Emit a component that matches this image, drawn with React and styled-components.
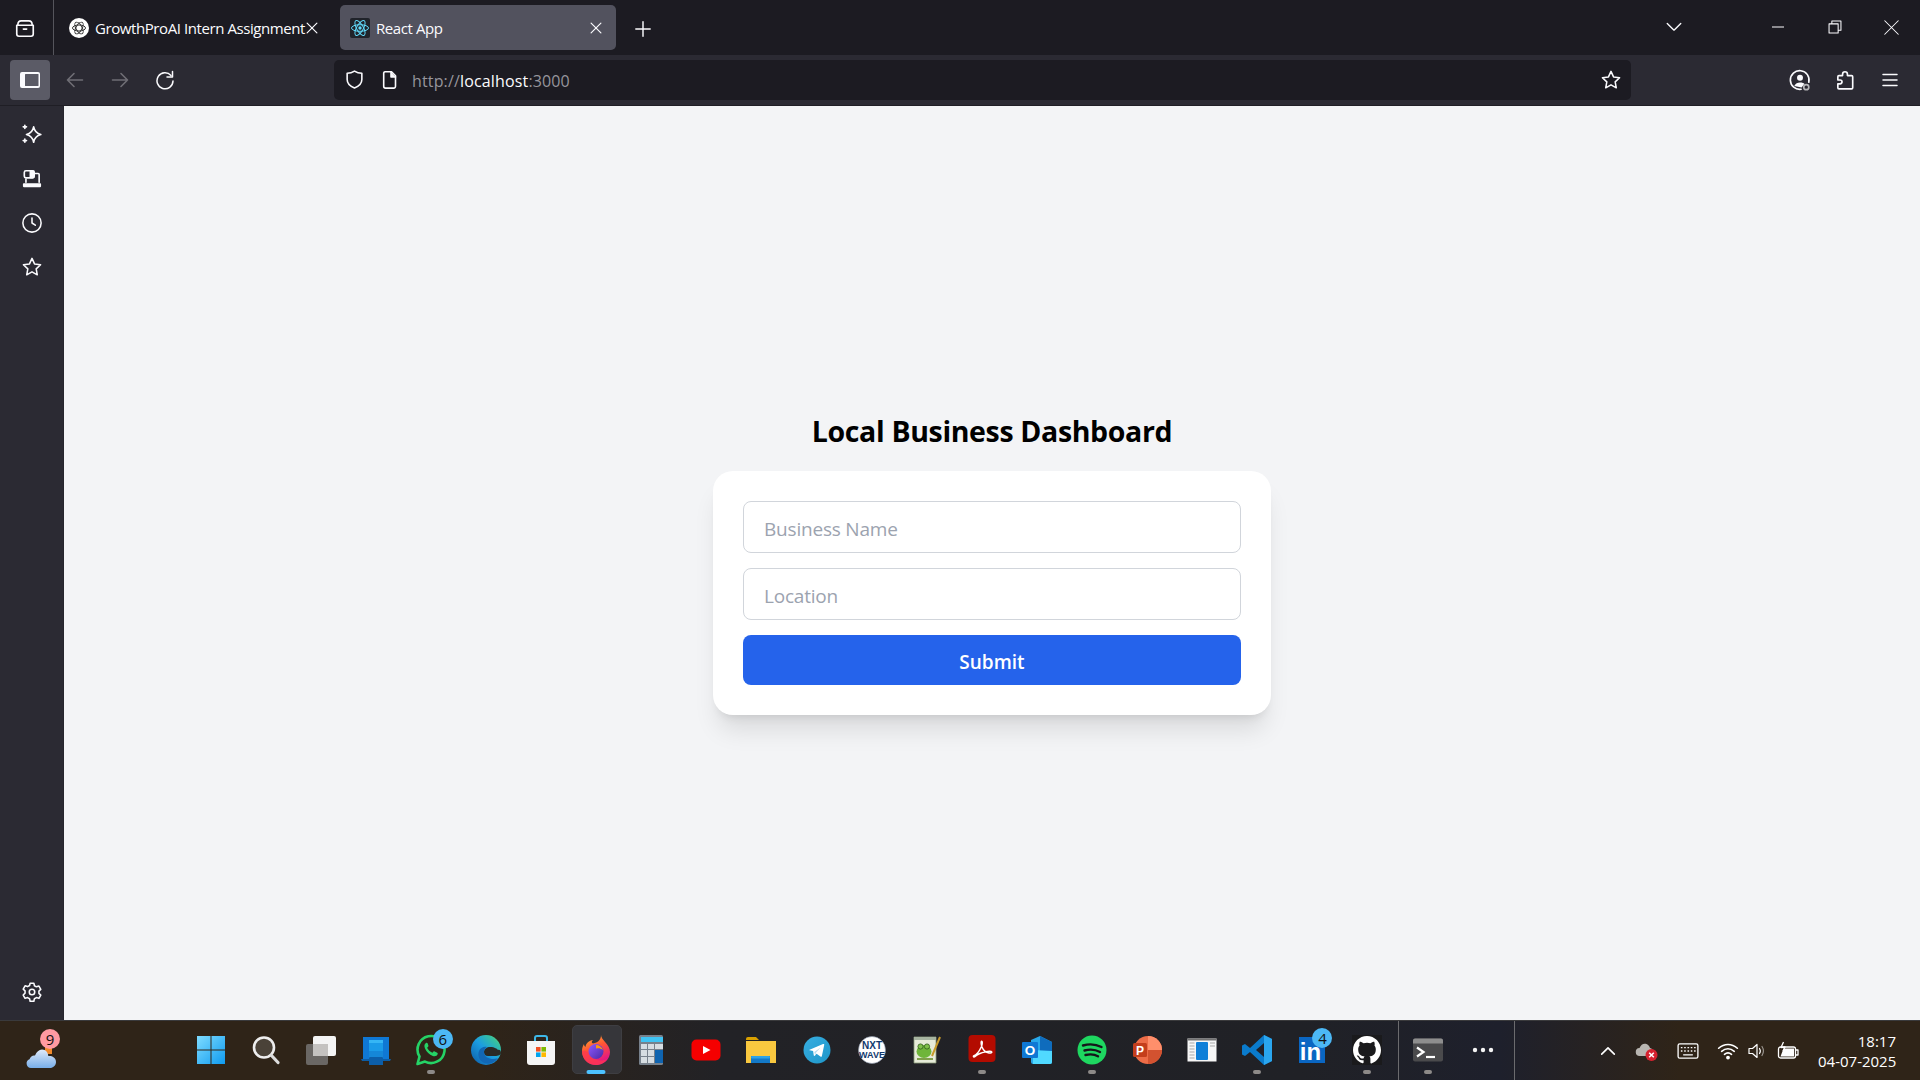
import React from "react";
import styled, { createGlobalStyle } from "styled-components";

const Global = createGlobalStyle`
  html, body { margin: 0; padding: 0; height: 1080px; overflow: hidden; }
  #root { height: 1080px; }
  * { box-sizing: border-box; }
  body { font-family: "Open Sans", "Noto Sans", sans-serif; }
  svg { flex: none; }
`;

const Screen = styled.div`
  width: 1920px; height: 1080px; display: flex; flex-direction: column; background: #1c1b22;
`;

/* browser tab strip */
const TabStrip = styled.div`
  height: 55px; flex: none; display: flex; align-items: stretch; background: #1c1b22; color: #fbfbfe;
`;
const StripButton = styled.div`
  width: 54px; display: flex; align-items: center; justify-content: center; border-right: 1px solid #55555c; padding-right: 4px;
`;
const Tab = styled.div`
  height: 45px; margin-top: 5px; width: ${p => p.$w}px; margin-left: ${p => p.$ml || 0}px; display: flex; align-items: center;
  padding: 0 ${p => p.$pr}px 0 ${p => p.$pl}px; border-radius: 5px; background: ${p => (p.$active ? "#52525e" : "transparent")};
  font-size: 15px; letter-spacing: -0.42px; white-space: nowrap; position: relative;
`;
const TabLabel = styled.span`
  margin-left: 6px; flex: 1; line-height: 20px;
`;
const StripSpacer = styled.div` flex: 1; `;
const WindowBtn = styled.div`
  width: ${p => p.$w}px; margin-left: ${p => p.$ml || 0}px; display: flex; align-items: center; justify-content: center;
  height: 54px;
`;
const NewTab = styled(WindowBtn)` margin-left: 4px; height: 57px; `;

/* browser toolbar */
const Toolbar = styled.div`
  height: 51px; flex: none; display: flex; align-items: center; gap: 5px; padding: 0 10px 1px; background: #2b2a33;
  border-bottom: 1px solid #1f1e25; color: #fbfbfe;
`;
const ToolBtn = styled.div`
  width: 40px; height: 40px; flex: none; display: flex; align-items: center; justify-content: center; border-radius: 4px;
  background: ${p => (p.$on ? "#5b5b66" : "transparent")}; color: ${p => (p.$dim ? "#6f6e75" : "#fbfbfe")};
`;
const UrlBar = styled.div`
  flex: 1; height: 40px; margin: 0 144px; border-radius: 5px; background: #1c1b22; display: flex; align-items: center;
  padding: 0 2px; font-size: 16px;
`;
const UrlIcon = styled.div`
  width: 36px; flex: none; display: flex; align-items: center; justify-content: center;
`;
const UrlText = styled.div`
  margin-left: 4px; flex: 1; color: #96959c; letter-spacing: 0.15px; padding-top: 3px;
  b { font-weight: 400; color: #fbfbfe; }
`;

/* body */
const Middle = styled.div` flex: 1; min-height: 0; display: flex; `;
const Sidebar = styled.div`
  width: 64px; flex: none; display: flex; flex-direction: column; align-items: center; padding: 6px 0 6px; background: #2b2a33;
  border-right: 1px solid #26252d; color: #fbfbfe;
`;
const SideBtn = styled.div`
  width: 44px; height: 44.4px; display: flex; align-items: center; justify-content: center; margin-top: ${p => (p.$bottom ? "auto" : "0")};
`;
const Page = styled.main`
  flex: 1; background: #f3f4f6; display: flex; flex-direction: column; align-items: center; justify-content: center;
`;
const Title = styled.h1`
  margin: 0 0 20px; font-size: 28.5px; line-height: 40px; font-weight: 700; color: #000; letter-spacing: -0.35px;
`;
const Card = styled.form`
  width: 558px; background: #fff; border-radius: 20px; padding: 30px; display: flex; flex-direction: column; gap: 15px;
  box-shadow: 0 20px 25px -5px rgba(0,0,0,.1), 0 8px 10px -6px rgba(0,0,0,.1);
`;
const Field = styled.input`
  height: 52px; width: 100%; border: 1px solid #d1d5db; border-radius: 8px; padding: 4px 20px 0; font: 400 19px "Open Sans", sans-serif;
  letter-spacing: -0.2px; background: #fff; outline: none;
  &::placeholder { color: #9ca3af; opacity: 1; }
`;
const Submit = styled.button`
  height: 50px; width: 100%; border: 0; border-radius: 8px; background: #2563eb; color: #fff; font: 600 19px "Open Sans", sans-serif; padding: 4px 0 0;
`;

/* windows taskbar */
const Taskbar = styled.footer`
  height: 60px; flex: none; display: flex; align-items: stretch; border-top: 1px solid #3a3a3c;
  background: linear-gradient(90deg, #2f2418 0, #2f2418 480px, #222226 720px, #202126 1300px, #1e202c 1500px, #2f2418 1680px, #2f2418 100%);
`;
const Weather = styled.div`
  width: 82px; margin-right: 101.5px; position: relative; display: flex; align-items: center; justify-content: center;
`;
const Cloud = styled.svg` margin-top: 14px; `;
const Slot = styled.div`
  width: 55.05px; flex: none; position: relative; display: flex; align-items: center; justify-content: center;
  padding-bottom: 1px; margin-left: ${p => p.$ml || 0}px;
`;
const ActiveBg = styled.div`
  position: absolute; left: 3px; right: 2px; top: 4px; bottom: 6px; border-radius: 5px; background: #36363a; border: 1px solid #3e3e42;
`;
const SlotIcon = styled.div` position: relative; display: flex; `;
const Dot = styled.div`
  position: absolute; left: 50%; transform: translateX(-50%); bottom: 6px; height: 4px; border-radius: 2px;
  width: ${p => (p.$on ? 19 : 8)}px; background: ${p => (p.$on ? "#4cc2ff" : "#8d8a88")};
`;
const Badge = styled.div`
  position: absolute; width: 20px; height: 20px; border-radius: 50%; top: ${p => p.$top}px; left: ${p => p.$left}px; background: ${p => p.$bg};
  color: #111; font-size: 15px; line-height: 20px; text-align: center;
`;
const Divider = styled.div`
  width: 1px; flex: none; background: #6b6b6e; margin-left: ${p => p.$ml || 0}px;
`;
const Tray = styled.div`
  margin-left: auto; display: flex; align-items: center; padding-right: 24px; color: #fff;
`;
const TrayItem = styled.div`
  width: ${p => p.$w}px; display: flex; justify-content: center; align-items: center;
`;
const Clock = styled.div`
  margin-left: 10px; width: 78px; text-align: right; font-size: 15px; line-height: 20px; color: #fff; white-space: nowrap;
`;

const Ic = ({ s = 20, w = 1.5, children, vb = 20 }) => (
  <svg width={s} height={s} viewBox={`0 0 ${vb} ${vb}`} fill="none" stroke="currentColor" strokeWidth={w} strokeLinecap="round" strokeLinejoin="round">{children}</svg>
);
const StarPath = "M10 2.2l2.3 5 5.5.7-4 3.8 1 5.4-4.8-2.7-4.8 2.7 1-5.4-4-3.8 5.5-.7z";

const T = ({ s = 32, children }) => <svg width={s} height={s} viewBox="0 0 32 32">{children}</svg>;

const icons = {
  win: (
    <T>
      <defs><linearGradient id="wg" x1="0" y1="0" x2="1" y2="1"><stop offset="0" stopColor="#7fdcff" /><stop offset="1" stopColor="#0f9bf0" /></linearGradient></defs>
      <path fill="url(#wg)" d="M2 2h13.500v13.500H2zM16.500 2H30v13.500H16.500zM2 16.500h13.500V30H2zM16.500 16.500H30V30H16.500z" />
    </T>
  ),
  search: (
    <T>
      <circle cx="14" cy="13.500" r="10" fill="#4a4238" stroke="#eee" strokeWidth="2.600" />
      <path d="M21.500 21.500L28 28.500" stroke="#ddd" strokeWidth="3.200" strokeLinecap="round" />
    </T>
  ),
  task: (
    <T>
      <rect x="1" y="10" width="22" height="21" rx="2" fill="#6a6764" />
      <rect x="8" y="2" width="23" height="20" rx="2" fill="#f4f4f4" />
      <rect x="8" y="10" width="15" height="12" fill="#c4c2c0" />
    </T>
  ),
  widgets: (
    <T>
      <path d="M3 3h26v23H3z" fill="#0f78d4" />
      <path d="M1 25h30l-1 2H2z" fill="#0c5da6" />
      <rect x="9" y="6" width="14" height="25" rx="1.500" fill="#1a9be8" />
      <rect x="9" y="6" width="14" height="3" fill="#35b6f5" />
      <rect x="9" y="17" width="14" height="6" fill="#1587d8" />
      <rect x="9" y="23" width="14" height="8" rx="1" fill="#0c5ea9" />
    </T>
  ),
  whatsapp: (
    <T>
      <path d="M2.500 30l2-7.500A13.500 13.500 0 1 1 10 27.600z" fill="none" stroke="#25d366" strokeWidth="2.600" strokeLinejoin="round" />
      <path d="M11 9c-1.800 1-2 3-1 5.500 1.600 3.500 4.300 6.100 7.800 7.400 2.400.8 4.200 0 4.900-1.900.2-.6 0-1-.5-1.300l-2.500-1.300c-.6-.3-1-.2-1.400.3l-.9 1.100c-2.500-1-4.200-2.700-5.300-5l1-1c.4-.5.5-.9.200-1.500L12.600 9.300c-.4-.6-1-.7-1.600-.3z" fill="#25d366" />
    </T>
  ),
  edge: (
    <T>
      <defs>
        <linearGradient id="eg" x1="0" y1="1" x2="1" y2="0"><stop offset="0" stopColor="#0c59a4" /><stop offset=".5" stopColor="#1b9de2" /><stop offset=".8" stopColor="#35c1a0" /><stop offset="1" stopColor="#86d562" /></linearGradient>
      </defs>
      <circle cx="16" cy="16" r="15" fill="url(#eg)" />
      <path d="M31 19c0 2-3 3-6 3h-7c-3 0-4-2-4-4 0-3 3-5 6-5 5 0 7 2 8 3 1-1 3 0 3 3z" fill="#2b2a26" />
      <path d="M14 18c0 5 5 7 9 7 3 0 5-1 5-1-3 5-9 7-14 5-4-2-7-7-5-12 1-3 5-5 8-4-2 1-3 3-3 5z" fill="#1267b5" />
    </T>
  ),
  store: (
    <T>
      <path d="M10 7V4c0-1 .8-2 2-2h8c1.200 0 2 1 2 2v3" fill="none" stroke="#3db8e8" strokeWidth="2" />
      <path d="M2 7h28v21a3 3 0 0 1-3 3H5a3 3 0 0 1-3-3z" fill="#f5f5f5" />
      <path d="M11 13h4.600v4.600H11z" fill="#f25022" />
      <path d="M16.400 13H21v4.600h-4.600z" fill="#7fba00" />
      <path d="M11 18.400h4.600V23H11z" fill="#00a4ef" />
      <path d="M16.400 18.400H21V23h-4.600z" fill="#ffb900" />
    </T>
  ),
  firefox: (
    <T>
      <defs>
        <linearGradient id="ff" x1="0" y1="0" x2=".4" y2="1"><stop offset="0" stopColor="#ffbd2f" /><stop offset=".5" stopColor="#ff5634" /><stop offset="1" stopColor="#e31587" /></linearGradient>
        <linearGradient id="ff2" x1="0" y1="0" x2="1" y2="1"><stop offset="0" stopColor="#9059ff" /><stop offset="1" stopColor="#4a2aa5" /></linearGradient>
      </defs>
      <path d="M21 1c0 5 9 9 9 17 0 7-6 13-14 13S2 25 2 17c0-3 .8-5 2-7 0 2 1 2.500 1.500 3C6 9 9 6.500 13 6c-2 2-1 3 0 3.500 5-1 8-3.500 8-8.500z" fill="url(#ff)" />
      <path d="M2 17c0 8 6 14 14 14 5 0 9-2.500 11.500-6.500C23 28 15 27 11 22 8 18 6 16 2 17z" fill="#ff3a4c" opacity=".75" />
      <circle cx="16" cy="17.500" r="7.500" fill="url(#ff2)" />
      <path d="M16 11c3 0 6 2 7 5-2-1.500-4-2-7-1.500z" fill="#ff980e" />
    </T>
  ),
  calc: (
    <svg width="24" height="30" viewBox="0 0 24 30">
      <rect x="0" y="0" width="24" height="30" rx="1.500" fill="#77818c" />
      <rect x="2" y="2" width="22" height="5" fill="#3fc3f3" />
      <path d="M2 9h6v5H2zM9 9h6v5H9zM16 9h8v5h-8zM2 15h6v6H2zM9 15h6v6H9zM2 22h6v6H2zM9 22h6v6H9z" fill="#d6dde2" />
      <rect x="16" y="15" width="8" height="13" fill="#0f64b0" />
    </svg>
  ),
  yt: (
    <T>
      <rect x="1.500" y="5.500" width="29" height="21" rx="5" fill="#f50000" />
      <path d="M13 12l7.500 4-7.500 4z" fill="#fff" />
    </T>
  ),
  files: (
    <T>
      <path d="M1 5a2 2 0 0 1 2-2h8l3 3h-13z" fill="#d9a000" />
      <path d="M1 7h30v22H1z" fill="#f9c83f" />
      <rect x="6" y="22" width="19" height="7" fill="#1379c8" />
      <rect x="6" y="22" width="19" height="2.500" rx="1" fill="#2ea3e6" />
    </T>
  ),
  telegram: (
    <T>
      <defs><linearGradient id="tg" x1="0" y1="0" x2="1" y2="1"><stop offset="0" stopColor="#37aee2" /><stop offset="1" stopColor="#1e96c8" /></linearGradient></defs>
      <circle cx="16" cy="16" r="13.500" fill="url(#tg)" />
      <path d="M8 16l14-6c1-.3 1.400.2 1.200 1l-2.300 11c-.2.900-.8 1-1.500.6l-3.800-2.800-1.900 1.900c-.4.400-.8.200-.9-.300l-.7-4.300-4.400-1.100z" fill="#fff" />
      <path d="M13.300 18l6.300-4.600-4.700 5.300-.6 3z" fill="#b9dcef" />
    </T>
  ),
  nxt: (
    <T>
      <circle cx="16" cy="16" r="13.500" fill="#fff" stroke="#8894a8" strokeWidth=".6" />
      <text x="16" y="15" textAnchor="middle" fontFamily="Liberation Sans, sans-serif" fontWeight="700" fontSize="10" fill="#123a6e">NXT</text>
      <text x="16" y="24" textAnchor="middle" fontFamily="Liberation Sans, sans-serif" fontWeight="700" fontSize="9" fill="#123a6e">WAVE</text>
    </T>
  ),
  npp: (
    <T>
      <path d="M3 3h22v26H3z" fill="#e6ebd8" stroke="#8a9a7a" strokeWidth=".8" />
      <path d="M3 3h22v3H3z" fill="#a7b4a0" />
      <ellipse cx="13" cy="17.500" rx="7.500" ry="6.500" fill="#6fb53a" />
      <circle cx="9.500" cy="12.500" r="2.600" fill="#7fc04a" stroke="#2f5a18" strokeWidth=".8" />
      <circle cx="16" cy="12.500" r="2.600" fill="#7fc04a" stroke="#2f5a18" strokeWidth=".8" />
      <path d="M6 25h16" stroke="#7fa04a" strokeWidth="2" />
      <path d="M21 22L29 3" stroke="#c79a2a" strokeWidth="2" />
    </T>
  ),
  acrobat: (
    <T>
      <rect x="2.500" y="1" width="27" height="27" rx="4" fill="#b30b00" />
      <path d="M7.500 22c3-1 6-5 8-9.500 1-3 1-5 .2-5.200-.8 0-.7 3 .3 5.700 1.500 3.700 4 5.500 7 6 2 .2 3-.3 2.800-1-.4-.8-3-.8-6-.2-5 1-9 3-11 5-.8.700-1.600-.1-1.300-.8z" fill="none" stroke="#fff" strokeWidth="1.500" />
    </T>
  ),
  outlook: (
    <T>
      <path d="M10 6l9-4 12 6v20a2 2 0 0 1-2 2H12a2 2 0 0 1-2-2z" fill="#28a8ea" />
      <path d="M19 2l12 6v9H19z" fill="#0f6cbd" />
      <path d="M12 16l19 1v11a2 2 0 0 1-2 2H12z" fill="#50d9ff" />
      <rect x="1" y="8" width="16" height="16" rx="1" fill="#0f78d4" />
      <text x="9" y="21" textAnchor="middle" fontFamily="Liberation Sans, sans-serif" fontWeight="700" fontSize="13.500" fill="#fff">O</text>
    </T>
  ),
  spotify: (
    <T>
      <circle cx="16" cy="16" r="14.500" fill="#1ed760" />
      <path d="M7 11.500c6-1.800 13-1.300 18.500 1.500M8.500 16.500c5-1.300 11-1 15.500 1.500M9.500 21c4.300-1 9-.8 12.500 1.300" fill="none" stroke="#15161a" strokeWidth="2.400" strokeLinecap="round" />
    </T>
  ),
  ppt: (
    <T>
      <circle cx="17" cy="16" r="14" fill="#ed6c47" />
      <path d="M17 2a14 14 0 0 1 14 14H17z" fill="#ff8f6b" />
      <path d="M17 16h14A14 14 0 0 1 17 30z" fill="#d35230" />
      <rect x="2" y="9" width="14" height="14" rx="1.500" fill="#c43e1c" />
      <text x="9" y="20.500" textAnchor="middle" fontFamily="Liberation Sans, sans-serif" fontWeight="700" fontSize="12" fill="#fff">P</text>
    </T>
  ),
  win2: (
    <T>
      <rect x="1.500" y="4.500" width="29" height="23" fill="#f6f6f6" />
      <rect x="1.500" y="4.500" width="29" height="2" fill="#737373" />
      <path d="M3.500 9h5M3.500 12h5M3.500 15h5M3.500 18h5M3.500 21h5M3.500 24h5" stroke="#a9a9a9" strokeWidth="1" />
      <rect x="10" y="8" width="12" height="18" rx="1" fill="#0f7fd8" />
      <path d="M24 9h5M24 12h5" stroke="#a9a9a9" strokeWidth="1" />
    </T>
  ),
  vscode: (
    <T>
      <path d="M23 1l8 4v22l-8 4L9 18l-5 4-3-1.500v-9L4 10l5 4z" fill="#0a7bcc" />
      <path d="M23 1l8 4v22l-8 4z" fill="#2aa6ef" />
      <path d="M23 9v14l-8-7z" fill="#20222a" />
    </T>
  ),
  in: (
    <T>
      <rect x="3" y="3" width="26" height="26" fill="#0a66c2" />
      <text x="14.500" y="26" textAnchor="middle" fontFamily="Liberation Sans, sans-serif" fontWeight="700" fontSize="24" fill="#fff">in</text>
    </T>
  ),
  gh: (
    <T>
      <rect x="1" y="1" width="30" height="30" fill="#1a1a1c" />
      <path d="M16 2C8.300 2 2 8.300 2 16c0 6.200 4 11.400 9.600 13.300.7.100 1-.3 1-.7v-2.400c-3.900.8-4.700-1.700-4.700-1.700-.6-1.600-1.500-2-1.500-2-1.300-.9.100-.9.100-.9 1.400.1 2.100 1.400 2.100 1.400 1.300 2.100 3.300 1.500 4.100 1.200.1-.9.500-1.500.9-1.900-3.100-.4-6.400-1.600-6.400-6.900 0-1.500.5-2.800 1.400-3.800-.1-.4-.6-1.800.1-3.700 0 0 1.200-.4 3.800 1.400a13 13 0 0 1 7 0c2.600-1.800 3.800-1.400 3.800-1.400.7 1.900.3 3.300.1 3.700.9 1 1.400 2.300 1.400 3.800 0 5.400-3.300 6.500-6.400 6.900.5.400 1 1.300 1 2.600v3.900c0 .4.300.8 1 .7C26 27.400 30 22.200 30 16 30 8.300 23.700 2 16 2z" fill="#fff" />
    </T>
  ),
  term: (
    <T>
      <rect x="1" y="4.500" width="30" height="23" rx="2" fill="#4a4a4c" />
      <path d="M1 6.500a2 2 0 0 1 2-2h26a2 2 0 0 1 2 2v3H1z" fill="#8e8e8e" />
      <path d="M5 13.500l6.500 4.500-6.500 4.500" fill="none" stroke="#fff" strokeWidth="2.200" />
      <path d="M14 23h9" stroke="#fff" strokeWidth="2.200" />
    </T>
  ),
  more: (
    <svg width="24" height="8" viewBox="0 0 24 8"><circle cx="4" cy="4" r="2.200" fill="#f4f4f4" /><circle cx="12" cy="4" r="2.200" fill="#f4f4f4" /><circle cx="20" cy="4" r="2.200" fill="#f4f4f4" /></svg>
  ),
};

const apps = [
  ["win"], ["search"], ["task"], ["widgets"],
  ["whatsapp", "grey", { t: "6", left: 29, top: 8 }], ["edge"], ["store"], ["firefox", "on"], ["calc"], ["yt"],
  ["files"], ["telegram"], ["nxt"], ["npp"], ["acrobat", "grey"], ["outlook"], ["spotify", "grey"], ["ppt"], ["win2"],
  ["vscode", "grey"], ["in", null, { t: "4", left: 28, top: 7 }], ["gh", "grey"],
];

const AppSlot = ({ name, dot, badge }) => (
  <Slot>
    {dot === "on" && <ActiveBg />}
    <SlotIcon>{icons[name]}</SlotIcon>
    {dot && <Dot $on={dot === "on"} />}
    {badge && <Badge $left={badge.left} $top={badge.top} $bg="#4cb8f5">{badge.t}</Badge>}
  </Slot>
);

export default function App() {
  return (
    <Screen>
      <Global />
      <TabStrip>
        <StripButton>
          <Ic s={22} w={1.5}><path d="M2.500 7.500h15v8a2 2 0 0 1-2 2h-11a2 2 0 0 1-2-2z" /><path d="M3.500 7c0-2 1-3.500 3-3.500h7c2 0 3 1.500 3 3.500" /><path d="M8.500 11h3" /></Ic>
        </StripButton>
        <Tab $w={286} $pl={15} $pr={21}>
          <svg width="20" height="20" viewBox="0 0 20 20">
            <circle cx="10" cy="10" r="10" fill="#fff" />
            <g fill="none" stroke="#333" strokeWidth="1">
              <ellipse cx="10" cy="10" rx="6.500" ry="3" />
              <ellipse cx="10" cy="10" rx="6.500" ry="3" transform="rotate(60 10 10)" />
              <ellipse cx="10" cy="10" rx="6.500" ry="3" transform="rotate(120 10 10)" />
            </g>
          </svg>
          <TabLabel>GrowthProAI Intern Assignment</TabLabel>
          <Ic s={14} w={1.7}><path d="M3 3l14 14M17 3L3 17" /></Ic>
        </Tab>
        <Tab $w={276} $pl={10} $pr={13} $active>
          <svg width="20" height="20" viewBox="0 0 20 20">
            <rect width="20" height="20" rx="2" fill="#20232a" />
            <g fill="none" stroke="#61dafb" strokeWidth="1">
              <ellipse cx="10" cy="10" rx="8.500" ry="3.300" />
              <ellipse cx="10" cy="10" rx="8.500" ry="3.300" transform="rotate(60 10 10)" />
              <ellipse cx="10" cy="10" rx="8.500" ry="3.300" transform="rotate(120 10 10)" />
            </g>
            <circle cx="10" cy="10" r="1.700" fill="#61dafb" />
          </svg>
          <TabLabel>React App</TabLabel>
          <Ic s={14} w={1.7}><path d="M3 3l14 14M17 3L3 17" /></Ic>
        </Tab>
        <NewTab $w={45}><Ic s={18} w={1.6}><path d="M10 2v16M2 10h16" /></Ic></NewTab>
        <StripSpacer />
        <WindowBtn $w={50}><Ic s={18} w={1.5}><path d="M2.500 6l7.500 7.500L17.500 6" /></Ic></WindowBtn>
        <WindowBtn $w={56} $ml={51}><Ic s={12} w={1.7}><path d="M0 10h20" /></Ic></WindowBtn>
        <WindowBtn $w={57}><Ic s={14} w={1.5}><path d="M1.500 5.500h13v13h-13z" /><path d="M5.500 5V1.500h13v13H15" /></Ic></WindowBtn>
        <WindowBtn $w={57}><Ic s={15} w={1.4}><path d="M1 1l18 18M19 1L1 19" /></Ic></WindowBtn>
      </TabStrip>

      <Toolbar>
        <ToolBtn $on>
          <svg width="20" height="16" viewBox="0 0 20 16">
            <rect x="0" y="0" width="20" height="16" rx="2" fill="#fbfbfe" />
            <rect x="5" y="2" width="13.500" height="12" rx=".5" fill="#5b5b66" />
          </svg>
        </ToolBtn>
        <ToolBtn $dim><Ic s={20} w={1.6}><path d="M2.500 10h15M9 3.500L2.500 10 9 16.500" /></Ic></ToolBtn>
        <ToolBtn $dim><Ic s={20} w={1.6}><path d="M17.500 10h-15M11 3.500l6.500 6.500-6.500 6.500" /></Ic></ToolBtn>
        <ToolBtn><Ic s={20} w={1.5}><path d="M16 5.500A8 8 0 1 0 18 11" /><path d="M17.500 1.500V7H12" /></Ic></ToolBtn>
        <UrlBar>
          <UrlIcon><Ic s={21} w={1.5}><path d="M10 2c2 1.300 4.500 2 7 2v6c0 4-3 6.500-7 8-4-1.500-7-4-7-8V4c2.500 0 5-.7 7-2z" /></Ic></UrlIcon>
          <UrlIcon><Ic s={20} w={1.6}><path d="M5 1.800h6.500l4 4v10.500a1.800 1.800 0 0 1-1.800 1.800H5.500a1.800 1.800 0 0 1-1.800-1.800V3A1.500 1.500 0 0 1 5 1.800z" /><path d="M11 2v5h4.500" fill="currentColor" /></Ic></UrlIcon>
          <UrlText>http://<b>localhost</b>:3000</UrlText>
          <UrlIcon><Ic s={22} w={1.4}><path d={StarPath} /></Ic></UrlIcon>
        </UrlBar>
        <ToolBtn>
          <Ic s={22} w={1.5}><path d="M18 12A8.500 8.500 0 1 0 11 18.400" /><circle cx="10" cy="8" r="2.700" fill="currentColor" stroke="none" /><path d="M4.800 15.500c1-2.500 3-3.300 5.200-3.300s3.500.5 4 1.300l-2.500 3.300z" fill="currentColor" stroke="none" /><circle cx="15.700" cy="16.500" r="2.300" stroke="#b5b5b8" /></Ic>
        </ToolBtn>
        <ToolBtn>
          <Ic s={22} w={1.5}><path d="M10 2.500c1.500 0 2.200 1 2.200 2.200v1.300h3.800a1 1 0 0 1 1 1V17a1 1 0 0 1-1 1H4.500a1 1 0 0 1-1-1v-3.500h2c1 0 1.800-.8 1.800-1.800S6.500 10 5.500 10h-2V7a1 1 0 0 1 1-1h3.300V4.700c0-1.200.7-2.200 2.200-2.200z" /></Ic>
        </ToolBtn>
        <ToolBtn><Ic s={20} w={1.5}><path d="M3 4.500h14M3 10h14M3 15.500h14" /></Ic></ToolBtn>
      </Toolbar>

      <Middle>
        <Sidebar>
          <SideBtn>
            <Ic s={22} w={1.5}><path d="M11.500 3.500c.7 3.500 2.500 6 6.500 7-4 1-5.800 3.500-6.500 7-.7-3.500-2.500-6-6.500-7 4-1 5.800-3.500 6.500-7z" /><path d="M3.500 2v3M2 3.500h3M3.500 14.500v3M2 16h3" /></Ic>
          </SideBtn>
          <SideBtn>
            <Ic s={22} w={1.5}><rect x="3" y="2.500" width="9" height="6.500" rx="1.500" /><path d="M8.500 3h3v5.500h-3z" fill="currentColor" /><path d="M13 5h2.500a1 1 0 0 1 1 1v7M4.500 10v3" /><path d="M2.500 14.500h15v2.200h-15z" fill="currentColor" /></Ic>
          </SideBtn>
          <SideBtn><Ic s={22} w={1.4}><circle cx="10" cy="10" r="8.300" /><path d="M10 5.500V10l3 2" /></Ic></SideBtn>
          <SideBtn><Ic s={22} w={1.4}><path d={StarPath} /></Ic></SideBtn>
          <SideBtn $bottom>
            <Ic s={22} w={1.4}><path d="M8.300 2h3.400l.5 2.300 1.800 1 2.300-.7 1.700 3-1.700 1.600v2l1.700 1.600-1.700 3-2.300-.7-1.800 1-.5 2.300H8.300l-.5-2.300-1.800-1-2.300.7-1.700-3L3.700 11V9L2 7.400l1.700-3 2.300.7 1.800-1z" /><circle cx="10" cy="10" r="2.500" /></Ic>
          </SideBtn>
        </Sidebar>
        <Page>
          <Title>Local Business Dashboard</Title>
          <Card onSubmit={e => e.preventDefault()}>
            <Field placeholder="Business Name" />
            <Field placeholder="Location" />
            <Submit type="submit">Submit</Submit>
          </Card>
        </Page>
      </Middle>

      <Taskbar>
        <Weather>
          <Cloud width="32" height="24" viewBox="0 0 32 24">
            <defs><linearGradient id="cl" x1="0" y1="0" x2="0" y2="1"><stop offset="0" stopColor="#dfeafa" /><stop offset="1" stopColor="#78aee8" /></linearGradient></defs>
            <rect x="20" y="0" width="7" height="8" fill="#f08a2c" />
            <path d="M6 22a4.500 4.500 0 0 1-1.500-8.700C5.500 10 8 9 10 9.500 11.500 6 14 3.500 17 3.500c4 0 6 3 6.300 6.500 3-.5 7.700 1 7.700 6 0 3.500-3 6-6 6z" fill="url(#cl)" />
          </Cloud>
          <Badge $left={40} $top={8} $bg="#ff9aa2">9</Badge>
        </Weather>
        {apps.map(([n, d, b]) => <AppSlot key={n} name={n} dot={d} badge={b} />)}
        <Divider $ml={3} />
        <Slot $ml={2}><SlotIcon>{icons.term}</SlotIcon><Dot /></Slot>
        <Slot>{icons.more}</Slot>
        <Divider $ml={3} />
        <Tray>
          <TrayItem $w={40}><Ic s={18} w={1.8}><path d="M3 13.500l7-7 7 7" /></Ic></TrayItem>
          <TrayItem $w={38}>
            <svg width="24" height="22" viewBox="0 0 24 22">
              <path d="M5 16a4 4 0 0 1-.5-8C6 4 9 3 11.500 4c2 .8 3 2.500 3.500 4 2 .2 3 2 3 4v4z" fill="#b8b5b1" />
              <circle cx="16.500" cy="15" r="6" fill="#d6222f" />
              <path d="M14.200 12.700l4.600 4.600M18.800 12.700l-4.600 4.600" stroke="#fff" strokeWidth="1.500" />
            </svg>
          </TrayItem>
          <TrayItem $w={44}>
            <Ic s={22} w={1.2}><rect x="1" y="3.500" width="18" height="13" rx="1.500" /><path d="M4 7h.5M7 7h.5M10 7h.5M13 7h.5M16 7h.5M4 10h.5M7 10h.5M10 10h.5M13 10h.5M16 10h.5M6 13.500h8" /></Ic>
          </TrayItem>
          <TrayItem $w={36}>
            <Ic s={22} w={1.5}><path d="M1.500 7.500c5-4.500 12-4.500 17 0M4.200 10.300c3.500-3 8-3 11.500 0M6.800 13c2-1.600 4.400-1.600 6.400 0" /><circle cx="10" cy="16" r="1" fill="currentColor" /></Ic>
          </TrayItem>
          <TrayItem $w={22}>
            <Ic s={20} w={1.2}><path d="M2 7.500h3.500L10 3.500v13l-4.500-4H2z" /><path d="M12.500 7.500c1 1.500 1 3.500 0 5" /><path d="M15 5.500c1.800 2.800 1.800 6.200 0 9" opacity=".5" /></Ic>
          </TrayItem>
          <TrayItem $w={40}>
            <svg width="22" height="20" viewBox="0 0 22 20" fill="none" stroke="#fff" strokeWidth="1.300" strokeLinejoin="round">
              <rect x="1.500" y="6" width="17" height="11" rx="2" />
              <path d="M19 9h2v5h-2" />
              <path d="M3.500 15.500l3-8h10.500v8z" fill="#fff" stroke="none" />
              <path d="M6.500 1L4 6.500l4-.5-2 4" />
            </svg>
          </TrayItem>
          <Clock>18:17<br />04-07-2025</Clock>
        </Tray>
      </Taskbar>
    </Screen>
  );
}
